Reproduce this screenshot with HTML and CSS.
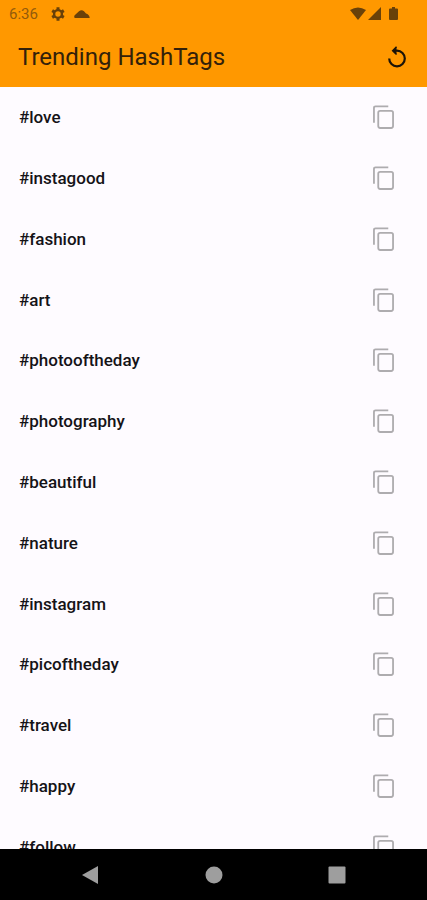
FILE: index.html
```html
<!DOCTYPE html>
<html lang="en">
<head>
<meta charset="utf-8">
<meta name="viewport" content="width=device-width, initial-scale=1">
<title>Trending HashTags</title>
<link rel="stylesheet" href="styles.css">
</head>
<body>
<svg class="sprite" aria-hidden="true">
  <symbol id="copy" viewBox="0 0 22 26">
    <path d="M1 19V3.500Q1 1.800 2.700 1.800H16" fill="none" stroke="currentColor" stroke-width="1.900"/>
    <rect x="5.500" y="6.500" width="15.500" height="18" rx="2" fill="none" stroke="currentColor" stroke-width="1.900"/>
  </symbol>
</svg>
<header class="top">
  <div class="status">
    <span class="clock">6:36</span>
    <svg class="gear" viewBox="0 0 14 14" aria-hidden="true"><g fill="none" stroke="currentColor"><circle cx="7" cy="7" r="3.900" stroke-width="2.400"/><path d="M7 .3v2.500M7 11.200v2.500M1.200 3.600l2.100 1.300M10.700 9.100l2.100 1.300M1.200 10.400L3.300 9.100M10.700 4.900l2.100-1.300" stroke-width="3"/></g></svg>
    <svg class="cloud" viewBox="0 0 16 10" aria-hidden="true"><path d="M1.500 9C-.2 9-.2 6.500 1.500 5.500L5 2.200Q7.500.2 10 2.200L12 4.500C14 5 16 7 15.600 9Z" fill="currentColor"/></svg>
    <span class="signals">
      <svg class="wifi" viewBox="0 0 16 13" aria-hidden="true"><path d="M0 3Q8-2 16 3L8 13Z" fill="currentColor"/></svg>
      <svg class="cell" viewBox="0 0 13 13" aria-hidden="true"><path d="M13 0V13H0Z" fill="currentColor"/></svg>
      <svg class="battery" viewBox="0 0 9 13" aria-hidden="true"><path d="M3 0H6V1.500H8Q9 1.500 9 2.500V12Q9 13 8 13H1Q0 13 0 12V2.500Q0 1.500 1 1.500H3Z" fill="currentColor"/></svg>
    </span>
  </div>
  <div class="bar">
    <h1>Trending HashTags</h1>
    <button class="reload" aria-label="Reload"><svg viewBox="0 0 20 22" aria-hidden="true"><path d="M2.200 12.500A7.800 7.800 0 1 0 10 4.700H7" fill="none" stroke="currentColor" stroke-width="2.200"/><path d="M9.500.8L5.600 4.700L9.500 8.600" fill="currentColor" stroke="currentColor" stroke-width="1.400"/></svg></button>
  </div>
</header>
<main class="content">
  <ul class="tags">
    <li><span>#love</span><button aria-label="Copy #love"><svg><use href="#copy"/></svg></button></li>
    <li><span>#instagood</span><button aria-label="Copy #instagood"><svg><use href="#copy"/></svg></button></li>
    <li><span>#fashion</span><button aria-label="Copy #fashion"><svg><use href="#copy"/></svg></button></li>
    <li><span>#art</span><button aria-label="Copy #art"><svg><use href="#copy"/></svg></button></li>
    <li><span>#photooftheday</span><button aria-label="Copy #photooftheday"><svg><use href="#copy"/></svg></button></li>
    <li><span>#photography</span><button aria-label="Copy #photography"><svg><use href="#copy"/></svg></button></li>
    <li><span>#beautiful</span><button aria-label="Copy #beautiful"><svg><use href="#copy"/></svg></button></li>
    <li><span>#nature</span><button aria-label="Copy #nature"><svg><use href="#copy"/></svg></button></li>
    <li><span>#instagram</span><button aria-label="Copy #instagram"><svg><use href="#copy"/></svg></button></li>
    <li><span>#picoftheday</span><button aria-label="Copy #picoftheday"><svg><use href="#copy"/></svg></button></li>
    <li><span>#travel</span><button aria-label="Copy #travel"><svg><use href="#copy"/></svg></button></li>
    <li><span>#happy</span><button aria-label="Copy #happy"><svg><use href="#copy"/></svg></button></li>
    <li><span>#follow</span><button aria-label="Copy #follow"><svg><use href="#copy"/></svg></button></li>
  </ul>
</main>
<nav class="system" aria-label="System">
  <button aria-label="Back"><svg viewBox="0 0 18 20" aria-hidden="true"><path d="M17 1V19L1 10Z" fill="currentColor"/></svg></button>
  <button aria-label="Home"><svg viewBox="0 0 18 18" aria-hidden="true"><circle cx="9" cy="9" r="8.500" fill="currentColor"/></svg></button>
  <button aria-label="Recent apps"><svg viewBox="0 0 18 18" aria-hidden="true"><rect x=".5" y=".5" width="17" height="17" rx="1" fill="currentColor"/></svg></button>
</nav>
</body>
</html>
```
FILE: styles.css
```css
* { box-sizing: border-box; }
body {
  margin: 0;
  height: 100vh;
  display: flex;
  flex-direction: column;
  overflow: hidden;
  background: #fefbff;
  color: #151317;
  font-family: Roboto, "Liberation Sans", sans-serif;
}
button {
  display: flex;
  padding: 0;
  border: 0;
  background: none;
  color: inherit;
}
svg { display: block; }
.sprite { position: absolute; width: 0; height: 0; }
.top { flex: none; background: #ff9800; }
.status {
  display: flex;
  align-items: center;
  height: 27px;
  padding: 0 29px 0 9px;
  color: #694109;
}
.clock { font-size: 15px; color: #935b0b; }
.gear { width: 14px; height: 14px; margin-left: 13px; }
.cloud { width: 16px; height: 10px; margin-left: 9px; }
.signals { display: flex; gap: 2px; margin-left: auto; }
.wifi { width: 16px; height: 13px; }
.cell { width: 13px; height: 13px; }
.battery { width: 9px; height: 13px; margin-left: 6px; }
.bar {
  display: flex;
  align-items: center;
  justify-content: space-between;
  height: 60px;
  padding: 0 20px 0 18px;
}
h1 { margin: 0; font-size: 24px; font-weight: 400; line-height: 28px; color: #33210a; }
.reload { color: #1c1408; }
.reload svg { width: 20px; height: 22px; }
.content { flex: 1; min-height: 0; overflow: hidden; }
.tags {
  display: grid;
  grid-auto-rows: 1fr;
  height: calc(100% + 28px);
  margin: 0;
  padding: 0 33px 0 19px;
  list-style: none;
}
.tags li {
  display: flex;
  align-items: center;
  justify-content: space-between;
  font-size: 17px;
  font-weight: 500;
  line-height: 24px;
}
.tags button { color: #aeacaf; }
.tags svg { width: 21px; height: 26px; }
.system {
  flex: none;
  display: flex;
  align-items: center;
  justify-content: space-between;
  height: 51px;
  padding: 0 81px;
  background: #000;
  color: #9e9e9e;
}
.system svg { width: 18px; height: 20px; }
```
